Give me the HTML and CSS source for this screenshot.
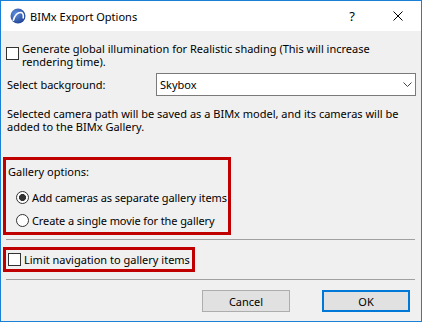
FILE: index.html
```html
<!DOCTYPE html>
<html>
<head>
    <title>BIMx Export Options</title>
    <link rel="stylesheet" href="styles.css">
</head>
<body>
    <div class="window">
        <div class="titlebar">
            <svg class="app-icon" width="16" height="16" viewBox="0 0 16 16">
                <defs>
                    <radialGradient id="ball" cx="0.35" cy="0.35" r="0.75">
                        <stop offset="0" stop-color="#5f8fdc"/>
                        <stop offset="1" stop-color="#1c3f92"/>
                    </radialGradient>
                </defs>
                <circle cx="8" cy="8" r="7.5" fill="url(#ball)"/>
                <path d="M3.2 12.8 C4.5 7 8 3.8 11.2 4.6 C13 5.1 13.6 7.5 13.2 10.5" fill="none" stroke="#fff" stroke-width="1.6"/>
            </svg>
            <span class="title">BIMx Export Options</span>
            <span class="caption-btn help">?</span>
            <span class="caption-btn close">
                <svg width="10" height="10" viewBox="0 0 10 10">
                    <path d="M0.5 0.5 L9.5 9.5 M9.5 0.5 L0.5 9.5" stroke="#000" stroke-width="1"/>
                </svg>
            </span>
        </div>

        <div class="content">
            <label class="check-row">
                <input type="checkbox">
                <span>Generate global illumination for Realistic shading (This will increase<br>rendering time).</span>
            </label>

            <div class="select-row">
                <span class="field-label">Select background:</span>
                <div class="select">
                    <span>Skybox</span>
                    <svg width="9" height="5" viewBox="0 0 9 5">
                        <path d="M0.5 0.5 L4.5 4.5 L8.5 0.5" fill="none" stroke="#444" stroke-width="1"/>
                    </svg>
                </div>
            </div>

            <p class="note">Selected camera path will be saved as a BIMx model, and its cameras will be<br>added to the BIMx Gallery.</p>

            <div class="group">
                <div class="group-title">Gallery options:</div>
                <div class="radio-list">
                    <label class="radio-row">
                        <input type="radio" name="gallery" checked>
                        <span>Add cameras as separate gallery items</span>
                    </label>
                    <label class="radio-row">
                        <input type="radio" name="gallery">
                        <span>Create a single movie for the gallery</span>
                    </label>
                </div>
            </div>

            <div class="sep"></div>

            <div class="group group-small">
                <label class="check-row tight">
                    <input type="checkbox">
                    <span>Limit navigation to gallery items</span>
                </label>
            </div>

            <div class="sep sep-low"></div>

            <div class="buttons">
                <button>Cancel</button>
                <button class="default">OK</button>
            </div>
        </div>
    </div>
</body>
</html>
```
FILE: styles.css
```css
* {
    box-sizing: border-box;
}
html, body {
    margin: 0;
}
body {
    font-family: "Noto Sans", sans-serif;
    font-size: 11px;
    color: #000;
    background-color: #fff;
}
.window {
    width: 422px;
    height: 322px;
    border: 1px solid #1a7fd6;
    background-color: #f0f0f0;
    display: flex;
    flex-direction: column;
    overflow: hidden;
}
.titlebar {
    height: 30px;
    flex: none;
    background-color: #fff;
    display: flex;
    align-items: center;
    padding-left: 9px;
}
.app-icon {
    margin-right: 4px;
}
.title {
    flex: 1;
    font-size: 11px;
}
.caption-btn {
    width: 46px;
    height: 30px;
    display: flex;
    align-items: center;
    justify-content: center;
}
.help {
    font-size: 13px;
}
.content {
    flex: 1;
    padding: 0 5px;
    display: flex;
    flex-direction: column;
    line-height: 13px;
}
input[type=checkbox], input[type=radio] {
    appearance: none;
    -webkit-appearance: none;
    margin: 0 3px 0 0;
    width: 13px;
    height: 13px;
    flex: none;
    border: 1px solid #333;
    background-color: #fff;
}
input[type=radio] {
    border-radius: 50%;
}
input[type=radio]:checked {
    background: radial-gradient(circle, #333 0, #333 3.2px, #fff 3.8px);
}
.check-row {
    display: flex;
    align-items: flex-start;
    margin-top: 11px;
}
.check-row input {
    margin-top: 5px;
}
.check-row.tight {
    margin: 0 0 0 1px;
    align-items: center;
    white-space: nowrap;
}
.check-row.tight input {
    margin-top: 0;
}
.select-row {
    display: flex;
    align-items: center;
    margin-top: 5px;
}
.field-label {
    width: 150px;
    padding-left: 1px;
}
.select {
    width: 260px;
    height: 23px;
    border: 1px solid #7a7a7a;
    background-color: #fff;
    display: flex;
    align-items: center;
    justify-content: space-between;
    padding: 0 3px 0 3px;
}
.note {
    margin: 11px 0 0 1px;
}
.group {
    flex: none;
    margin: 24px 0 0 -3px;
    width: 228px;
    border: 3px solid #c00000;
    padding: 5px 0 5px 1px;
}
.group-title {
    padding-left: 1px;
}
.radio-list {
    margin: 13px 0 0 9px;
    display: flex;
    flex-direction: column;
    gap: 10px;
}
.radio-row {
    display: flex;
    align-items: center;
    white-space: nowrap;
    letter-spacing: -0.1px;
}
.sep {
    flex: none;
    height: 1px;
    margin: 4px 1px 0 0;
    background-color: #a0a0a0;
}
.group-small {
    margin-top: 7px;
    width: 192px;
    padding: 3px 0 3px 1px;
}
.sep-low {
    margin-top: 7px;
}
.buttons {
    display: flex;
    justify-content: flex-end;
    gap: 32px;
    margin-top: 10px;
    padding-right: 6px;
}
.buttons button {
    width: 88px;
    height: 22px;
    background-color: #e1e1e1;
    border: 1px solid #adadad;
    font-family: "Noto Sans", sans-serif;
    font-size: 11px;
    color: #000;
    padding: 0;
}
.buttons button.default {
    border: 2px solid #0078d7;
}
```
